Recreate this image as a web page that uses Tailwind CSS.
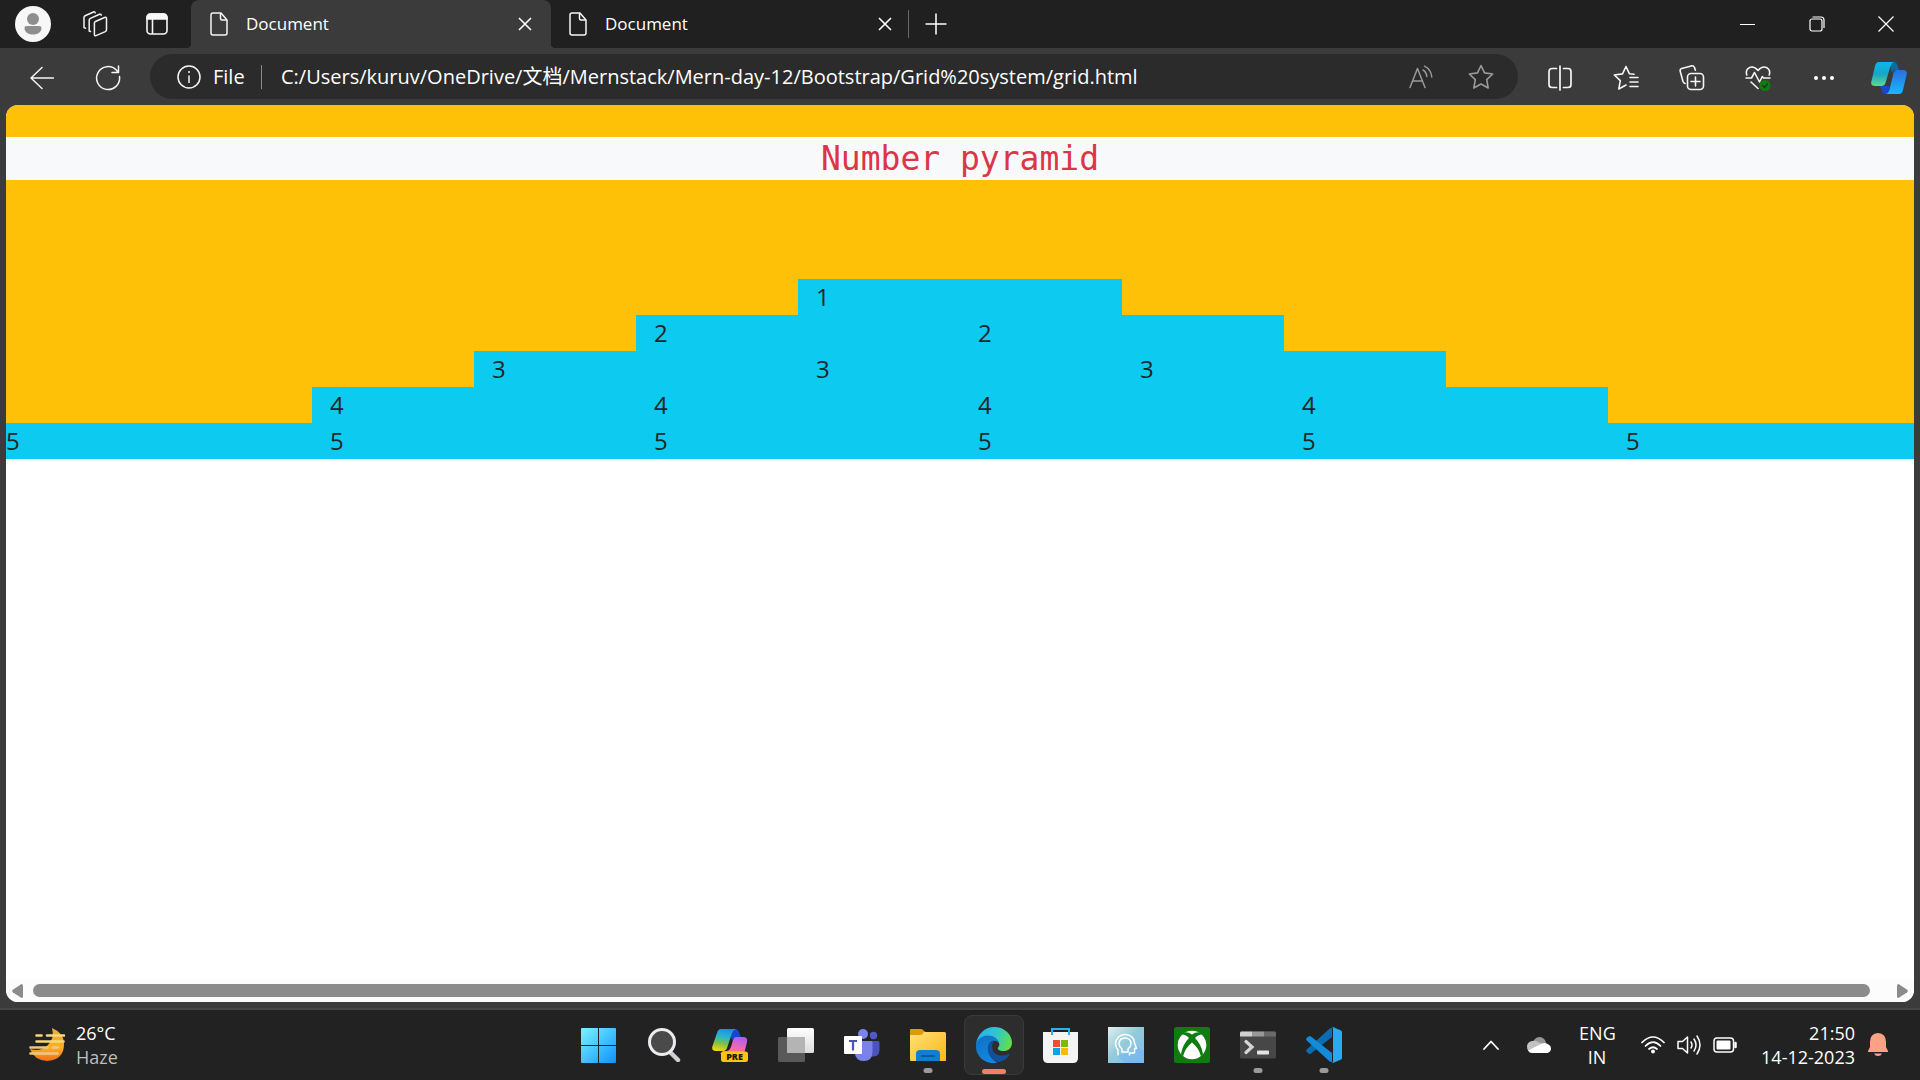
<!DOCTYPE html>
<html lang="en">
<head>
<meta charset="utf-8">
<title>Document</title>
<script src="https://cdn.jsdelivr.net/npm/@tailwindcss/browser@4"></script>
</head>
<body class="flex h-screen flex-col overflow-hidden bg-[#3b3b3b] font-['Open_Sans','Noto_Sans_CJK_SC',sans-serif] text-white">

<!-- Tab strip -->
<header class="flex h-12 shrink-0 bg-[#202020] pl-0.5">
  <button aria-label="Profile" class="grid w-[62px] place-items-center">
    <svg width="36" height="36" viewBox="0 0 36 36"><circle cx="18" cy="18" r="18" fill="#f7f7f7"/><circle cx="18" cy="13" r="6" fill="#8e8e8e"/><path d="M11.500 20h13a2 2 0 0 1 2 2c0 4-3.500 6.500-8.500 6.500S9.500 26 9.500 22a2 2 0 0 1 2-2z" fill="#8e8e8e"/></svg>
  </button>
  <button aria-label="Workspaces" class="grid w-[62px] place-items-center">
    <svg width="26" height="26" viewBox="0 0 26 26" fill="none" stroke="#f2f2f2" stroke-width="1.500" stroke-linejoin="round" stroke-linecap="round"><path d="M13.500 10.500 22.500 6.500q2-.8 2 1v11.200q0 1.300-1.200 1.900L14 24.600q-1.600.7-1.600-1V12q0-1 1.100-1.500z"/><path d="M8.500 20.500 7.200 20V9.200q0-1.200 1.200-1.800L17.500 3.300q1.500-.5 1.700.9"/><path d="M3.500 17.300 2 16.600V6.400q0-1.200 1.100-1.700L11.500 1q1.300-.5 1.700.7"/></svg>
  </button>
  <button aria-label="Tab actions" class="grid w-[62px] place-items-center">
    <svg width="22" height="22" viewBox="0 0 22 22" fill="none" stroke="#f7f7f7" stroke-width="1.600"><rect x="1" y="1" width="20" height="20" rx="3.500"/><path d="M1 4.500A3.500 3.500 0 0 1 4.500 1h13A3.500 3.500 0 0 1 21 4.500V6H1z" fill="#f7f7f7"/><path d="M6.500 6v15"/></svg>
  </button>
  <div class="relative ml-[3px] flex w-[360px] items-center rounded-t-lg bg-[#3b3b3b] pl-[19px] pr-2.5">
    <span class="absolute bottom-0 -left-1 size-1 bg-[radial-gradient(circle_at_0_0,#202020_68%,#3b3b3b_72%)]"></span>
    <span class="absolute bottom-0 -right-1 size-1 bg-[radial-gradient(circle_at_100%_0,#202020_68%,#3b3b3b_72%)]"></span>
    <svg width="18" height="24" viewBox="0 0 18 24" fill="none" stroke="#f5f5f5" stroke-width="1.500" stroke-linejoin="round"><path d="M3 1h8l6 7v13a2 2 0 0 1-2 2H3a2 2 0 0 1-2-2V3a2 2 0 0 1 2-2z"/><path d="M10.500 1v5.500q0 1.500 1.500 1.500h5"/></svg>
    <span class="ml-[18px] flex-1 text-[17px] leading-6">Document</span>
    <button aria-label="Close tab" class="grid size-8 place-items-center"><svg width="14" height="14" viewBox="0 0 14 14" stroke="#fff" stroke-width="1.600"><path d="m1 1 12 12M13 1 1 13"/></svg></button>
  </div>
  <div class="flex w-[357px] items-center pl-[18px] pr-[7px]">
    <svg width="18" height="24" viewBox="0 0 18 24" fill="none" stroke="#f5f5f5" stroke-width="1.500" stroke-linejoin="round"><path d="M3 1h8l6 7v13a2 2 0 0 1-2 2H3a2 2 0 0 1-2-2V3a2 2 0 0 1 2-2z"/><path d="M10.500 1v5.500q0 1.500 1.500 1.500h5"/></svg>
    <span class="ml-[18px] flex-1 text-[17px] leading-6">Document</span>
    <button aria-label="Close tab" class="grid size-8 place-items-center"><svg width="14" height="14" viewBox="0 0 14 14" stroke="#fff" stroke-width="1.600"><path d="m1 1 12 12M13 1 1 13"/></svg></button>
  </div>
  <div class="my-2.5 w-px bg-[#6a6a6a]"></div>
  <button aria-label="New tab" class="grid w-[53px] place-items-center"><svg width="22" height="22" viewBox="0 0 22 22" stroke="#fff" stroke-width="1.500"><path d="M11 .5v21M.5 11h21"/></svg></button>
  <div class="ml-auto flex">
    <button aria-label="Minimize" class="grid w-[69px] place-items-center"><svg width="15" height="15" viewBox="0 0 15 15" stroke="#fff"><path d="M0 7.500h15"/></svg></button>
    <button aria-label="Restore" class="grid w-[69px] place-items-center"><svg width="16" height="16" viewBox="0 0 16 16" fill="none" stroke="#fff" stroke-width="1.200"><rect x="1" y="3" width="12" height="12" rx="2"/><path d="M3.500 1H12a3 3 0 0 1 3 3v8"/></svg></button>
    <button aria-label="Close" class="grid w-[69px] place-items-center"><svg width="16" height="16" viewBox="0 0 16 16" stroke="#fff" stroke-width="1.200"><path d="m.5.5 15 15M15.500.5l-15 15"/></svg></button>
  </div>
</header>

<!-- Toolbar -->
<nav class="flex h-[57px] shrink-0 pl-[9px] pb-1 pt-1.5">
  <button aria-label="Back" class="grid w-[66px] place-items-center"><svg width="24" height="24" viewBox="0 0 24 24" fill="none" stroke="#f5f5f5" stroke-width="1.500" stroke-linecap="round" stroke-linejoin="round"><path d="M23.500 12H1M12 1.500 1 12l11 10.500"/></svg></button>
  <button aria-label="Refresh" class="grid w-[66px] place-items-center"><svg width="26" height="26" viewBox="0 0 26 26" fill="none" stroke="#f5f5f5" stroke-width="1.500" stroke-linecap="round" stroke-linejoin="round"><path d="M24.500 11.500A11.500 11.500 0 1 1 21.500 5.200L23 7M23.500 1v6.500H17"/></svg></button>
  <div class="ml-[9px] mr-[9px] flex h-[45px] flex-1 items-center rounded-full bg-[#2b2b2b] pl-[27px] pr-[7px]">
    <svg width="24" height="24" viewBox="0 0 24 24" fill="none" stroke="#f5f5f5" stroke-width="1.500"><circle cx="12" cy="12" r="11"/><path d="M12 10.500V18"/><circle cx="12" cy="7" r="1" fill="#f5f5f5" stroke="none"/></svg>
    <label for="address" class="ml-3 w-12 text-xl">File</label>
    <div class="h-6 w-px bg-[#8a8a8a]"></div>
    <input id="address" class="ml-[19px] min-w-0 flex-1 bg-transparent text-xl outline-none" value="C:/Users/kuruv/OneDrive/文档/Mernstack/Mern-day-12/Bootstrap/Grid%20system/grid.html">
    <button aria-label="Read aloud" class="grid w-[60px] place-items-center"><svg width="24" height="24" viewBox="0 0 24 24" fill="none" stroke="#9a9a9a" stroke-width="1.500" stroke-linecap="round" stroke-linejoin="round"><path d="m1 22.500 7.500-19 7.500 19M3.700 16h9.700M14 5q3.500 2 3.800 6.500M15.500 1.200q6.500 3.300 7.300 10.800"/></svg></button>
    <button aria-label="Add to favorites" class="grid w-[60px] place-items-center"><svg width="26" height="26" viewBox="0 0 26 26" fill="none" stroke="#9a9a9a" stroke-width="1.600" stroke-linejoin="round"><path d="m13 1.500 3.500 7.400 8.200 1.100-6 5.700 1.500 8.300-7.200-4-7.200 4 1.500-8.300-6-5.700 8.200-1.100z"/></svg></button>
  </div>
  <button aria-label="Split screen" class="grid w-[66px] place-items-center"><svg width="24" height="26" viewBox="0 0 24 26" fill="none" stroke="#f5f5f5" stroke-width="1.700" stroke-linecap="round"><path d="M8.500 3.500H4a3 3 0 0 0-3 3v13a3 3 0 0 0 3 3h4.500M15.500 3.500H20a3 3 0 0 1 3 3v13a3 3 0 0 1-3 3h-4.500M12 1v24"/></svg></button>
  <button aria-label="Favorites" class="grid w-[66px] place-items-center"><svg width="26" height="26" viewBox="0 0 26 26" fill="none" stroke="#f5f5f5" stroke-width="1.600" stroke-linecap="round" stroke-linejoin="round"><path d="M21 9.300 16.300 8.700 13 1.500 9.500 8.900l-8.200 1.100 6 5.700-1.500 8.300 7.200-4M17 12.500h8M17 17h8M17 21.500h8"/></svg></button>
  <button aria-label="Collections" class="grid w-[66px] place-items-center"><svg width="26" height="26" viewBox="0 0 26 26" fill="none" stroke="#f5f5f5" stroke-width="1.600" stroke-linecap="round" stroke-linejoin="round"><rect x="8.500" y="8.500" width="16" height="16" rx="3.500"/><path d="M16.500 12v9M12 16.500h9M6 18.500q-1.500-.5-2-2L1.200 6.200q-.5-2 1.500-2.800l9.500-2.500q2.200-.5 3.300 1.600l.9 2.700"/></svg></button>
  <button aria-label="Browser essentials" class="grid w-[66px] place-items-center"><svg width="26" height="26" viewBox="0 0 26 26" fill="none" stroke="#f5f5f5" stroke-width="1.600" stroke-linecap="round" stroke-linejoin="round"><path d="M1.800 10C0 4.500 4 2 7 2q3 0 6 3.500Q16 2 19 2c3 0 7 2.500 5.200 8M1 13h5.500l3-5.500 5 9.500 2.800-5.500L18.500 13H25M6 17l7 6.500"/><circle cx="20" cy="20.500" r="5.500" fill="#107c10" stroke="none"/><path d="m17.500 20.500 2 2 3-3.500" stroke="#2b2b2b" stroke-width="1.300"/></svg></button>
  <button aria-label="Settings and more" class="grid w-[66px] place-items-center"><svg width="20" height="6" viewBox="0 0 20 6" fill="#fff"><circle cx="2" cy="3" r="2"/><circle cx="10" cy="3" r="2"/><circle cx="18" cy="3" r="2"/></svg></button>
  <button aria-label="Copilot" class="grid w-[63px] place-items-center"><svg width="36" height="34" viewBox="0 0 36 34"><defs><linearGradient id="ca" x1="0" y1="0" x2="0" y2="1"><stop offset="0" stop-color="#0fb5ee"/><stop offset=".5" stop-color="#15a6c6"/><stop offset="1" stop-color="#62d88f"/></linearGradient><linearGradient id="cb" x1="0" y1="0" x2="0" y2="1"><stop offset="0" stop-color="#2a6fdd"/><stop offset="1" stop-color="#16b8ff"/></linearGradient></defs><path d="M18 1h4.500q3 0 4 3l1.500 5h-3q-3 0-4 3z" fill="#0a6d9c"/><path d="M9 25h10l-1 8h-3q-3 0-4-3z" fill="#1947cf"/><path d="M8 1h15q-2.500 1-3.500 4l-5 17q-1 3-4 3H4q-5 0-3.500-5L4 5q1-4 4-4z" fill="url(#ca)"/><path d="M26 9h6q5 0 3.500 5L32 29q-1 4-4 4H15q2.500-1 3.500-4l4-17q1-3 3.500-3z" fill="url(#cb)"/></svg></button>
</nav>

<!-- Page viewport -->
<main class="mx-1.5 flex min-h-0 flex-1 flex-col overflow-hidden rounded-xl bg-white text-2xl leading-9 text-[#212529]">
  <div class="bg-[#ffc107] pt-8">
    <h1 class="mb-[99px] bg-[#f8f9fa] text-center font-['DejaVu_Sans_Mono',monospace] text-[33px] leading-[43px] text-[#dc3545]">Number pyramid</h1>
    <div class="-mx-[18px] grid grid-cols-12">
      <div class="col-span-2 col-start-6 bg-[#0dcaf0] px-[18px]">1</div>
    </div>
    <div class="-mx-[18px] grid grid-cols-12">
      <div class="col-span-2 col-start-5 bg-[#0dcaf0] px-[18px]">2</div>
      <div class="col-span-2 bg-[#0dcaf0] px-[18px]">2</div>
    </div>
    <div class="-mx-[18px] grid grid-cols-12">
      <div class="col-span-2 col-start-4 bg-[#0dcaf0] px-[18px]">3</div>
      <div class="col-span-2 bg-[#0dcaf0] px-[18px]">3</div>
      <div class="col-span-2 bg-[#0dcaf0] px-[18px]">3</div>
    </div>
    <div class="-mx-[18px] grid grid-cols-12">
      <div class="col-span-2 col-start-3 bg-[#0dcaf0] px-[18px]">4</div>
      <div class="col-span-2 bg-[#0dcaf0] px-[18px]">4</div>
      <div class="col-span-2 bg-[#0dcaf0] px-[18px]">4</div>
      <div class="col-span-2 bg-[#0dcaf0] px-[18px]">4</div>
    </div>
    <div class="-mx-[18px] grid grid-cols-12">
      <div class="col-span-2 bg-[#0dcaf0] px-[18px]">5</div>
      <div class="col-span-2 bg-[#0dcaf0] px-[18px]">5</div>
      <div class="col-span-2 bg-[#0dcaf0] px-[18px]">5</div>
      <div class="col-span-2 bg-[#0dcaf0] px-[18px]">5</div>
      <div class="col-span-2 bg-[#0dcaf0] px-[18px]">5</div>
      <div class="col-span-2 bg-[#0dcaf0] px-[18px]">5</div>
    </div>
  </div>
  <div class="mt-auto flex h-[23px] items-center bg-[#fcfcfc] px-1.5">
    <svg width="11" height="14" viewBox="0 0 11 14" fill="#8b8b8b"><path d="M9.500 0q1.500 0 1.500 1.500v11q0 1.500-1.500 1.500L.8 8.200Q-.4 7 .8 5.800z"/></svg>
    <div class="mx-2.5 mr-[27px] h-[13px] flex-1 rounded-full bg-[#8b8b8b]"></div>
    <svg width="11" height="14" viewBox="0 0 11 14" fill="#8b8b8b"><path d="M1.500 0Q0 0 0 1.500v11Q0 14 1.500 14l8.700-5.800q1.200-1.200 0-2.400z"/></svg>
  </div>
</main>

<!-- Taskbar -->
<footer class="mt-1.5 grid h-[72px] shrink-0 grid-cols-[1fr_auto_1fr] border-t-2 border-[#454545] bg-[#222222] text-lg leading-6">
  <button class="flex items-center gap-[11px] pl-[29px] text-left">
    <svg width="36" height="34" viewBox="0 0 36 34"><defs><linearGradient id="mo" x1="0" y1="0" x2="0" y2="1"><stop offset="0" stop-color="#e3ae3f"/><stop offset=".6" stop-color="#ffad1f"/><stop offset="1" stop-color="#f26f1b"/></linearGradient></defs><path d="M23 0q12 5 12 16 0 16-17 17Q5 32 1 21q10 3 17-3 8-7 5-18z" fill="url(#mo)"/><g stroke="#f7d97a" stroke-width="2.600" stroke-linecap="round"><path d="M7.500 7.500h5M18 7.500h17M7.500 13.500h27"/><path d="M1.500 19.500h17M24 19.500h5M1.500 25.500h27" stroke="#eac985"/></g></svg>
    <span><span class="block">26°C</span><span class="block text-[#bdbdbd]">Haze</span></span>
  </button>

  <div class="flex items-center pl-0.5">
    <button aria-label="Start" class="grid w-[66px] place-items-center"><svg width="35" height="35" viewBox="0 0 35 35"><defs><linearGradient id="wi" x1="0" y1="0" x2="1" y2="1"><stop offset="0" stop-color="#7df3ff"/><stop offset="1" stop-color="#0a93ff"/></linearGradient></defs><path d="M1 0h16v17H0V1a1 1 0 0 1 1-1zM18 0h16a1 1 0 0 1 1 1v16H18zM0 18h17v17H1a1 1 0 0 1-1-1zM18 18h17v16a1 1 0 0 1-1 1H18z" fill="url(#wi)"/></svg></button>
    <button aria-label="Search" class="grid w-[66px] place-items-center"><svg width="34" height="34" viewBox="0 0 34 34" fill="none"><path d="m23 24 8 8" stroke="#cfcfd4" stroke-width="4.500" stroke-linecap="round"/><circle cx="15" cy="14" r="12.500" fill="#4a4a4a" stroke="#ececf0" stroke-width="3"/></svg></button>
    <button aria-label="Copilot preview" class="grid w-[66px] place-items-center"><svg width="36" height="34" viewBox="0 0 36 34"><defs><linearGradient id="pa" x1=".5" y1="0" x2=".3" y2="1"><stop offset="0" stop-color="#1b8ff0"/><stop offset=".35" stop-color="#2cb5c8"/><stop offset=".65" stop-color="#7cc04c"/><stop offset="1" stop-color="#f8d808"/></linearGradient><linearGradient id="pb" x1=".7" y1="0" x2=".3" y2="1"><stop offset="0" stop-color="#b25cf5"/><stop offset=".6" stop-color="#f06bae"/><stop offset="1" stop-color="#ff8a4a"/></linearGradient></defs><path d="M17 1h6q3 0 4 3l2 6h-5q-3 0-4 3z" fill="#1746c8"/><path d="M9 1h15q-3 1-4 4l-5 15q-1 3-4 3H4q-5 0-3.500-5L5 5q1-4 4-4z" fill="url(#pa)"/><path d="M24 9h7q5 0 4 5l-3 12H8l3-3h4q3-1 4-4l2-7q1-3 3-3z" fill="url(#pb)"/><rect x="9" y="23.500" width="27" height="10.500" rx="2.500" fill="#fcc60a"/><text x="22.500" y="32" text-anchor="middle" font-family="Open Sans, sans-serif" font-size="9" font-weight="800" fill="#1d1a10">PRE</text></svg></button>
    <button aria-label="Task view" class="grid w-[66px] place-items-center"><svg width="36" height="34" viewBox="0 0 36 34"><defs><linearGradient id="tv" x1="0" y1="0" x2="0" y2="1"><stop offset="0" stop-color="#fff"/><stop offset="1" stop-color="#dcdcdc"/></linearGradient></defs><rect x="9" y="0" width="27" height="25" rx="1.500" fill="url(#tv)"/><rect x="0" y="9" width="27" height="25" rx="1.500" fill="#595959"/><path d="M9 9h18v16H9z" fill="#b4b4b4"/></svg></button>
    <button aria-label="Teams" class="grid w-[66px] place-items-center"><svg width="36" height="34" viewBox="0 0 36 34"><circle cx="29.500" cy="7.500" r="3.700" fill="#5059c9"/><path d="M22 13h12q1.500 0 1.500 1.500V22q0 6-6 6.500H22z" fill="#4b53bc"/><circle cx="19" cy="6" r="5" fill="#7b83eb"/><path d="M11 13h16q1.500 0 1.500 1.500V24q0 9-9 9-8 0-9-9z" fill="#7b83eb"/><rect x="0" y="8" width="18" height="18" rx="1" fill="#fff"/><path d="M5 13h8M9 13v9.500" stroke="#4b53bc" stroke-width="2.200"/></svg></button>
    <button aria-label="File Explorer" class="relative grid h-full w-[66px] place-items-center"><svg width="36" height="34" viewBox="0 0 36 34"><defs><linearGradient id="fo" x1="0" y1="0" x2="1" y2="1"><stop offset="0" stop-color="#ffe07a"/><stop offset="1" stop-color="#fcb813"/></linearGradient></defs><path d="M1 1h10q1 0 2 1l2.500 2-3 4H0V2q0-1 1-1z" fill="#e09a08"/><path d="M0 7h10q1.500 0 2.500-1l1.500-2h20.500Q36 4 36 5.500v27q0 .5-1.500.5H1q-1 0-1-1z" fill="url(#fo)"/><path d="M6 33v-7q0-4 4-4h16q4 0 4 4v7z" fill="#0f7fd0"/><path d="M11.500 28h13" stroke="#0b4f8f" stroke-width="1.500" stroke-linecap="round"/></svg><span class="absolute bottom-[7px] left-1/2 h-[5px] w-[9px] -translate-x-1/2 rounded-full bg-[#9a9a9a]"></span></button>
    <button aria-label="Microsoft Edge" class="relative mx-[3px] grid size-[60px] place-items-center rounded-lg border border-[#3a3a3a] bg-[#2d2d2d]"><svg width="36" height="36" viewBox="0 0 36 36"><defs><linearGradient id="ea" x1="0" y1=".3" x2="1" y2=".6"><stop offset="0" stop-color="#2aaef0"/><stop offset=".5" stop-color="#2fc6cf"/><stop offset="1" stop-color="#62e045"/></linearGradient><linearGradient id="eb" x1="0" y1="0" x2=".5" y2="1"><stop offset="0" stop-color="#0f6fc4"/><stop offset="1" stop-color="#1287e0"/></linearGradient></defs><path d="M0 18C1 7 9 0 18 0c11 0 18 8 18 15.500 0 6-4 8.500-8.500 8.500-4 0-6.500-1.500-5.500-3.500 2-2 1.500-4 .5-5.500C19 9 4 7 0 18z" fill="url(#ea)"/><path d="M0 18C1 11 7 8.500 12 8.500c6 0 10 3.500 11 7.500-3-3-8-3-10 1-3 6 1 14 8 18.700C9 38-1 29 0 18z" fill="url(#eb)"/><path d="M17.500 13.500C13 15 11 19 12 24c1.500 7 7 11.500 12 11 4-1 7.500-4 9.300-7.200.3-.7-.3-1.200-1-.8-6 3-14 1.500-15.800-4.500-.8-3 0-6 1-9z" fill="#12509e"/></svg><span class="absolute bottom-0 left-1/2 h-[5px] w-6 -translate-x-1/2 rounded-full bg-[#f57f66]"></span></button>
    <button aria-label="Microsoft Store" class="grid w-[66px] place-items-center"><svg width="35" height="35" viewBox="0 0 35 35"><path d="M0 4h35v26q0 5-5 5H5q-5 0-5-5z" fill="#f4f4f4"/><path d="M9 7V1h17v6" fill="none" stroke="#27b2f5" stroke-width="2"/><path d="M10 12h7v7h-7z" fill="#f25022"/><path d="M18 12h7v7h-7z" fill="#7fba00"/><path d="M10 20h7v7h-7z" fill="#00a4ef"/><path d="M18 20h7v7h-7z" fill="#ffb900"/></svg></button>
    <button aria-label="Assistant" class="grid w-[66px] place-items-center"><svg width="36" height="36" viewBox="0 0 36 36" fill="none"><defs><linearGradient id="as" x1="0" y1="0" x2="1" y2="1"><stop offset="0" stop-color="#e2eeee"/><stop offset=".45" stop-color="#92ccd8"/><stop offset="1" stop-color="#7cbcf5"/></linearGradient></defs><path d="M0 0h36v36H0z" fill="url(#as)"/><path d="M9 28 17 36h19V24l-8-5-4 7z" fill="#77b4f4" opacity=".6"/><g stroke="#fff" stroke-width="1.500" stroke-linejoin="round"><path d="M10 28.500V23q-2.500-3-2.500-6.500C8 11 12 7.500 17 7.500c5.500 0 9.500 3.500 9.500 8.500l2 5.500h-2V26h-5v2.500"/><path d="M14 25v-3q-3-2.500-3-5.500c.3-3.500 2.800-5.500 6-5.500s6 2 6 5.500q0 3-3 5.500v3z"/></g></svg></button>
    <button aria-label="Xbox" class="grid w-[66px] place-items-center"><svg width="36" height="36" viewBox="0 0 36 36"><rect width="36" height="36" rx="2.500" fill="#107c10"/><circle cx="18" cy="18" r="14.300" fill="#fff"/><path d="M9.500 5.500Q14 4.500 18 7.500q4-3 8.500-2l2 2q-4-.5-7.500 3.500 6.500 6.500 8 16l-2 2.500Q25 21 18 15.500 11 21 9 29.500L7 27q1.500-9.500 8-16-3.500-4-7.500-3.500z" fill="#107c10"/></svg></button>
    <button aria-label="Terminal" class="relative grid h-full w-[66px] place-items-center"><svg width="36" height="28" viewBox="0 0 36 28"><rect y=".5" width="36" height="27" rx="1.500" fill="#474747"/><path d="M1 .5h11v5H0v-4z" fill="#cfcfcf"/><path d="M12 .5h12v5H12z" fill="#989898"/><path d="M24 .5h11l1 1v4H24z" fill="#6a6a6a"/><path d="m6 10.500 6 5.500-6 5.500" fill="none" stroke="#d6d6d6" stroke-width="3.200" stroke-linecap="round"/><rect x="17" y="19.500" width="12" height="4" rx=".8" fill="#e3e3e3"/></svg><span class="absolute bottom-[7px] left-1/2 h-[5px] w-[9px] -translate-x-1/2 rounded-full bg-[#9a9a9a]"></span></button>
    <button aria-label="Visual Studio Code" class="relative grid h-full w-[66px] place-items-center"><svg width="36" height="36" viewBox="0 0 36 36"><path d="M26 1v9L5 26.500q-1 1-2.500 0L.7 25q-1.200-1.200 0-2.500L24 1.200z" fill="#0b6cb0"/><path d="M26 35v-9L5 9.500q-1-1-2.500 0L.7 11q-1.200 1.200 0 2.500L24 34.800z" fill="#128bd8"/><path d="M26 0q.7-.3 1.500.2L35 3.500q1 .5 1 1.500v26q0 1-1 1.500l-7.500 3.300q-.8.4-1.500.2 1-.5 1-2V2q0-1.500-1-2z" fill="#27a9f3"/></svg><span class="absolute bottom-[7px] left-1/2 h-[5px] w-[9px] -translate-x-1/2 rounded-full bg-[#9a9a9a]"></span></button>
  </div>

  <div class="flex items-center justify-end pr-8">
    <button aria-label="Show hidden icons"><svg width="16" height="10" viewBox="0 0 16 10" fill="none" stroke="#fff" stroke-width="1.800" stroke-linecap="round" stroke-linejoin="round"><path d="m1 9 7-7.500L15 9"/></svg></button>
    <button aria-label="OneDrive" class="ml-7"><svg width="24" height="16" viewBox="0 0 24 16"><circle cx="12.500" cy="6.500" r="6.500" fill="#979797"/><path d="M5 4q4-1 7 1.500L18 8 4.500 15.500Q0 14.500 0 9.500 0 5 5 4z" fill="#c2c2c2"/><path d="M15 6.500q4-1.500 6.500 1 2.500 1 2.500 4t-3.500 4.500H5q-2.500 0-4-2.500z" fill="#fff"/></svg></button>
    <button aria-label="Input language" class="ml-7 w-9 text-center">ENG<br>IN</button>
    <button aria-label="Network, volume and battery" class="ml-[26px] flex items-center gap-3">
      <svg width="24" height="18" viewBox="0 0 24 18" fill="none" stroke="#fff" stroke-width="1.700" stroke-linecap="round"><path d="M1 6.500q11-11 22 0M4.500 10q7.500-7.500 15 0M8 13q4-3.500 8 0"/><circle cx="12" cy="15.500" r="2" fill="#fff" stroke="none"/></svg>
      <svg width="24" height="20" viewBox="0 0 24 20" fill="none" stroke="#fff" stroke-width="1.500" stroke-linecap="round" stroke-linejoin="round"><path d="M1 6.500h4.500l5-4.500v16l-5-4.500H1zM14 7q2 3 0 6M17 4q4 6 0 12M20 1q6 9 0 18"/></svg>
      <svg width="24" height="16" viewBox="0 0 24 16" fill="none" stroke="#fff" stroke-width="1.500"><rect x="1" y="1" width="19.500" height="14" rx="3"/><rect x="3.500" y="3.500" width="14" height="9" rx="1" fill="#fff" stroke="none"/><path d="M22.500 6v4" stroke-width="2.500" stroke-linecap="round"/></svg>
    </button>
    <button aria-label="Clock" class="ml-6 text-right">21:50<br>14-12-2023</button>
    <button aria-label="Notifications" class="ml-[13px]"><svg width="20" height="24" viewBox="0 0 20 24" fill="#fca184"><path d="M10 0q8 .5 8 9v5l2 4q.3 1-.7 1H.7q-1 0-.7-1l2-4V9q0-8.500 8-9zM6 20.500h8q-1 2.500-4 2.500t-4-2.500z"/></svg></button>
  </div>
</footer>
</body>
</html>
